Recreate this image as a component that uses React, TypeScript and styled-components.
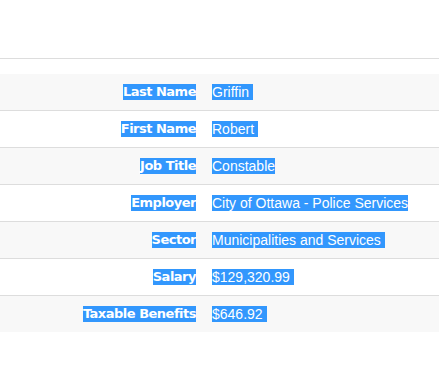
import React from "react";
import styled, { createGlobalStyle } from "styled-components";

const GlobalStyle = createGlobalStyle`
  html, body {
    margin: 0;
    padding: 0;
    background: #ffffff;
  }
`;

const rows = [
  { label: "Last Name", value: "Griffin " },
  { label: "First Name", value: "Robert " },
  { label: "Job Title", value: "Constable" },
  { label: "Employer", value: "City of Ottawa - Police Services" },
  { label: "Sector", value: "Municipalities and Services " },
  { label: "Salary", value: "$129,320.99 " },
  { label: "Taxable Benefits", value: "$646.92 " },
];

const App = () => {
  return (
    <Page>
      <GlobalStyle />
      <Header />
      <Table>
        {rows.map((r, i) => (
          <Row key={r.label} $striped={i % 2 === 0}>
            <Label>
              <Selected>{r.label}</Selected>
            </Label>
            <Value>
              <Selected>{r.value}</Selected>
            </Value>
          </Row>
        ))}
      </Table>
    </Page>
  );
};

const Page = styled.div`
  width: 100%;
`;

const Header = styled.div`
  height: 58px;
  border-bottom: 1px solid #dddddd;
`;

const Table = styled.div`
  margin-top: 15px;
  display: flex;
  flex-direction: column;
`;

const Row = styled.div<{ $striped: boolean }>`
  display: grid;
  grid-template-columns: 204px 1fr;
  align-items: center;
  height: 36px;
  background: ${(p) => (p.$striped ? "#f8f8f8" : "#ffffff")};
  border-bottom: 1px solid #dddddd;

  &:last-child {
    border-bottom: none;
  }
`;

const Label = styled.div`
  text-align: right;
  padding-right: 8px;
  font-family: "DejaVu Sans", Verdana, sans-serif;
  font-weight: bold;
  font-size: 13px;
  letter-spacing: -0.5px;
`;

const Value = styled.div`
  padding-left: 8px;
  font-family: "Liberation Sans", Arial, sans-serif;
  font-size: 14px;
  white-space: pre;
`;

const Selected = styled.span`
  display: inline-block;
  line-height: 16px;
  background: #3297fd;
  color: #ffffff;
  white-space: pre;
`;

export default App;
